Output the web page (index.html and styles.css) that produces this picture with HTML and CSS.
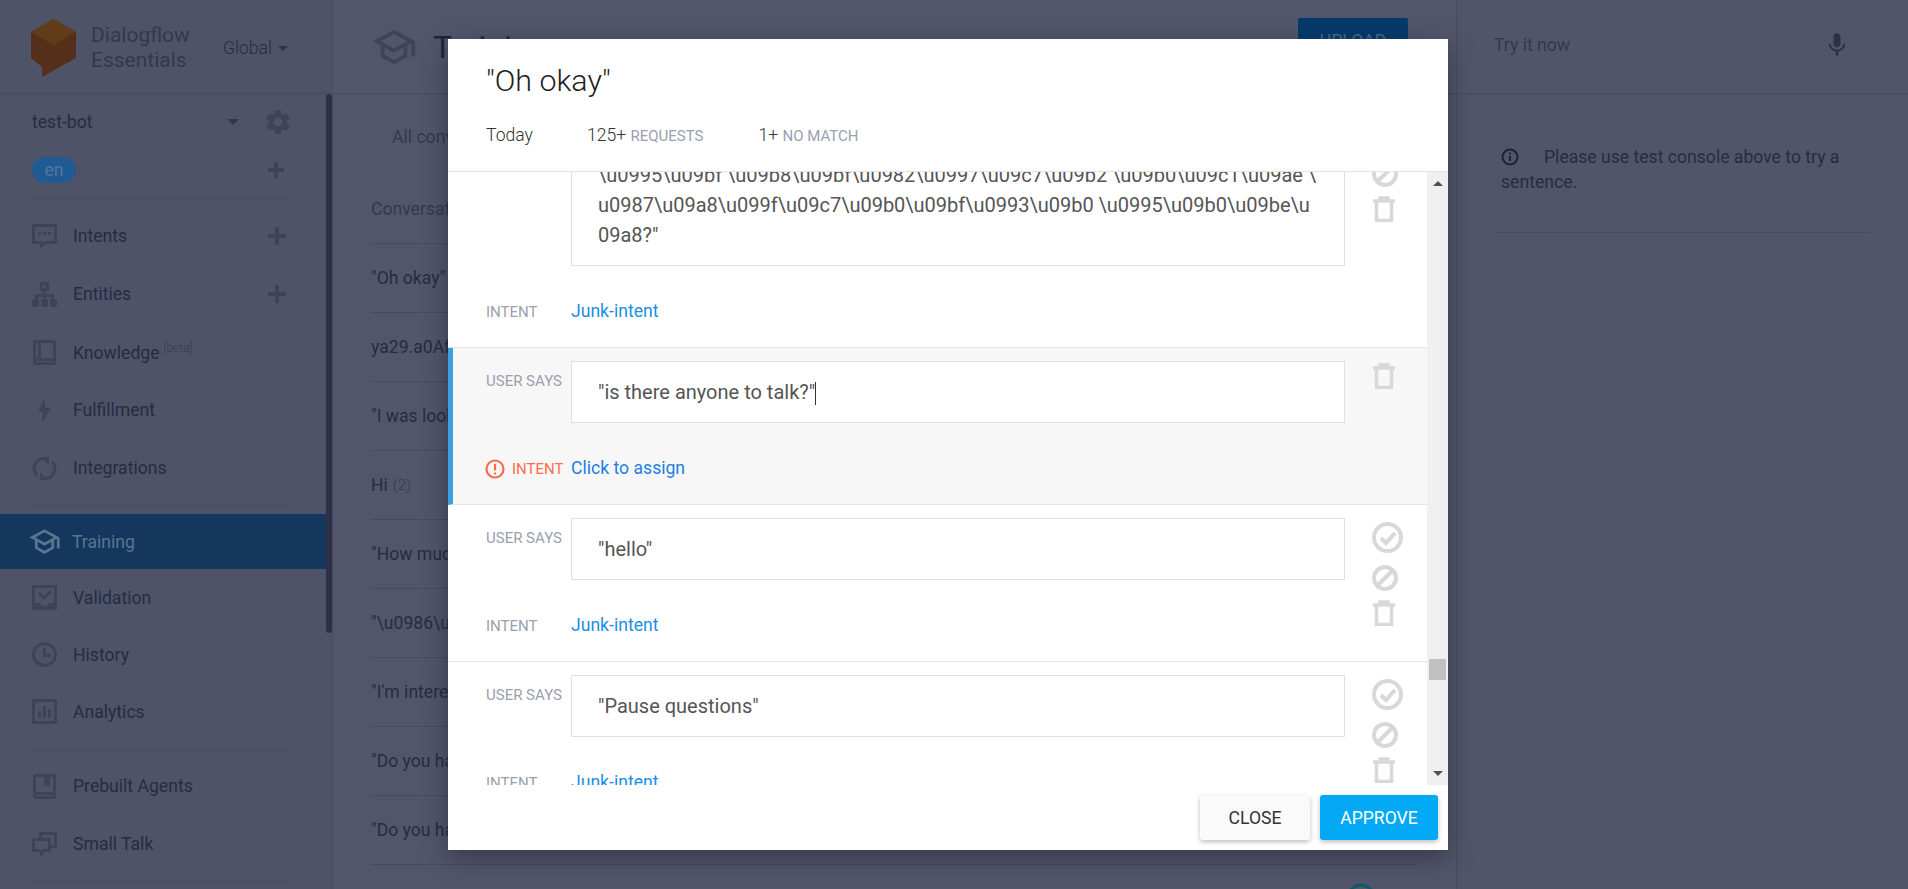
FILE: index.html
```html
<!DOCTYPE html>
<html lang="en">
<head>
    <meta charset="UTF-8">
    <title>Dialogflow Essentials - Training</title>
    <link rel="stylesheet" href="styles.css">
</head>
<body>
    <!-- Sidebar -->
    <aside class="sidebar">
        <div class="brand">
            <svg class="brand-logo" viewBox="0 0 45 58">
                <path fill="#562f1a" d="M0 13 22.500 0 45 13V39L11 58V48L0 39z"/>
                <path fill="#613c18" d="M0 13 22.500 0 45 13 22.500 26z"/>
            </svg>
            <div class="brand-name">Dialogflow<br>Essentials</div>
            <div class="region">Global <span class="caret-down"></span></div>
        </div>
        <div class="agent-row">
            <span class="agent-name">test-bot</span>
            <span class="caret-down agent-caret"></span>
            <svg class="nav-icon gear" viewBox="0 0 24 24"><path d="M19.140 12.940c.04-.3.06-.61.06-.94 0-.32-.02-.64-.07-.94l2.030-1.580c.18-.14.23-.41.12-.61l-1.920-3.320c-.12-.22-.37-.29-.59-.22l-2.390.96c-.5-.38-1.030-.7-1.620-.94l-.36-2.540c-.04-.24-.24-.41-.48-.41h-3.840c-.24 0-.43.17-.47.41l-.36 2.540c-.59.24-1.130.57-1.620.94l-2.390-.96c-.22-.08-.47 0-.59.22L2.740 8.870c-.12.21-.08.47.12.61l2.030 1.580c-.05.3-.09.63-.09.94s.02.64.07.94l-2.030 1.580c-.18.14-.23.41-.12.61l1.920 3.320c.12.22.37.29.59.22l2.390-.96c.5.38 1.030.7 1.620.94l.36 2.540c.05.24.24.41.48.41h3.840c.24 0 .44-.17.47-.41l.36-2.540c.59-.24 1.130-.56 1.620-.94l2.390.96c.22.08.47 0 .59-.22l1.920-3.320c.12-.22.07-.47-.12-.61l-2.010-1.580zM12 15.600c-1.980 0-3.600-1.620-3.600-3.600s1.620-3.600 3.600-3.600 3.600 1.620 3.600 3.600-1.620 3.600-3.600 3.600z"/></svg>
        </div>
        <div class="lang-row">
            <span class="lang-pill">en</span>
            <span class="plus plus-small"></span>
        </div>
        <div class="divider"></div>

        <a class="nav-item">
            <svg class="nav-icon" viewBox="0 0 25 25"><path fill-rule="evenodd" d="M1 0h23a1 1 0 0 1 1 1v18a1 1 0 0 1-1 1H14l-6 5v-5H1a1 1 0 0 1-1-1V1a1 1 0 0 1 1-1zm2 3v14h7v2.500l3-2.500h9V3z"/><rect x="6" y="8" width="3" height="3"/><rect x="11" y="8" width="3" height="3"/><rect x="16" y="8" width="3" height="3"/></svg>
            <span>Intents</span><span class="plus"></span>
        </a>
        <a class="nav-item">
            <svg class="nav-icon" viewBox="0 0 25 25"><path fill-rule="evenodd" d="M8 0h9v9H8zm3 3v3h3V3z"/><rect x="11" y="9" width="3" height="9"/><rect x="3" y="12" width="19" height="3"/><rect x="3" y="12" width="3" height="6"/><rect x="19" y="12" width="3" height="6"/><rect y="17" width="7" height="8" rx="2"/><rect x="9" y="17" width="7" height="8" rx="2"/><rect x="18" y="17" width="7" height="8" rx="2"/></svg>
            <span>Entities</span><span class="plus"></span>
        </a>
        <a class="nav-item">
            <svg class="nav-icon" viewBox="0 0 25 25"><path fill-rule="evenodd" d="M3 0h19a2 2 0 0 1 2 2v21a2 2 0 0 1-2 2H3a2 2 0 0 1-2-2V2a2 2 0 0 1 2-2zm1 3v15h2V3zm5 0v15h12V3zM4 21v1h17v-1z"/></svg>
            <span>Knowledge<sup class="beta">[beta]</sup></span>
        </a>
        <a class="nav-item">
            <svg class="nav-icon" viewBox="0 0 25 25"><path d="M13 0 6 14h5l-1 11 9-15h-6z"/></svg>
            <span>Fulfillment</span>
        </a>
        <a class="nav-item">
            <svg class="nav-icon" viewBox="0 0 25 25"><path class="sync-arc" d="M5 19.500A10 10 0 0 1 12 2.500M20 5.500A10 10 0 0 1 13 22.500"/><path d="M9 1h8v8zM16 24H8v-8z"/></svg>
            <span>Integrations</span>
        </a>
        <div class="divider"></div>

        <a class="nav-item active">
            <svg class="nav-icon school" viewBox="0 0 24 24"><path d="M12 3 1 9l4 2.180v6L12 21l7-3.820v-6l2-1.090V17h2V9L12 3zm6.820 6L12 12.720 5.180 9 12 5.280 18.820 9zM17 15.990l-5 2.730-5-2.730v-3.720L12 15l5-2.730v3.720z"/></svg>
            <span>Training</span>
        </a>
        <a class="nav-item compact">
            <svg class="nav-icon" viewBox="0 0 25 25"><path fill-rule="evenodd" d="M1 0h23a1 1 0 0 1 1 1v23a1 1 0 0 1-1 1H1a1 1 0 0 1-1-1V1a1 1 0 0 1 1-1zm2 3v15h5l2 3h5l2-3h5V3z"/><path d="m6 9 2-2 4 4 6-6 2 2-8 8z"/></svg>
            <span>Validation</span>
        </a>
        <a class="nav-item compact">
            <svg class="nav-icon" viewBox="0 0 25 25"><path fill-rule="evenodd" d="M12.500 0a12.500 12.500 0 1 1 0 25 12.500 12.500 0 0 1 0-25zm0 3a9.500 9.500 0 1 0 0 19 9.500 9.500 0 0 0 0-19z"/><path d="M11 6h3v6h5v3h-8z"/></svg>
            <span>History</span>
        </a>
        <a class="nav-item compact">
            <svg class="nav-icon" viewBox="0 0 25 25"><path fill-rule="evenodd" d="M1 0h23a1 1 0 0 1 1 1v23a1 1 0 0 1-1 1H1a1 1 0 0 1-1-1V1a1 1 0 0 1 1-1zm2 3v19h19V3z"/><rect x="6" y="12" width="3" height="7"/><rect x="11" y="7" width="3" height="12"/><rect x="16" y="10" width="3" height="9"/></svg>
            <span>Analytics</span>
        </a>
        <div class="divider divider-low"></div>

        <a class="nav-item">
            <svg class="nav-icon" viewBox="0 0 25 25"><path fill-rule="evenodd" d="M3 0h19a2 2 0 0 1 2 2v21a2 2 0 0 1-2 2H3a2 2 0 0 1-2-2V2a2 2 0 0 1 2-2zm1 3v15h17V3zm0 18v1h17v-1z"/><path d="M12 3h6v10l-3-2-3 2z"/></svg>
            <span>Prebuilt Agents</span>
        </a>
        <a class="nav-item">
            <svg class="nav-icon" viewBox="0 0 25 25"><path fill-rule="evenodd" d="M8 0h16a1 1 0 0 1 1 1v14a1 1 0 0 1-1 1h-5v3a1 1 0 0 1-1 1h-5l-5 5v-5H1a1 1 0 0 1-1-1V7a1 1 0 0 1 1-1h6V1a1 1 0 0 1 1-1zm2 3v3h8a1 1 0 0 1 1 1v6h3V3zM3 9v8h6v2.500l2.500-2.500H16V9z"/></svg>
            <span>Small Talk</span>
        </a>
        <div class="divider"></div>
        <div class="sidebar-scroll"></div>
    </aside>

    <!-- Training list behind the dialog -->
    <main class="main">
        <header class="main-header">
            <svg class="main-icon" viewBox="0 0 24 24"><path d="M12 3 1 9l4 2.180v6L12 21l7-3.820v-6l2-1.090V17h2V9L12 3zm6.820 6L12 12.720 5.180 9 12 5.280 18.820 9zM17 15.990l-5 2.730-5-2.730v-3.720L12 15l5-2.730v3.720z"/></svg>
            <h1>Training</h1>
            <button class="upload">UPLOAD</button>
        </header>
        <div class="tab-line">All conversations</div>
        <div class="conv-list">
            <div class="conv-row conv-head">Conversation</div>
            <div class="conv-row">"Oh okay"</div>
            <div class="conv-row">ya29.a0AfH6SM</div>
            <div class="conv-row">"I was looking for</div>
            <div class="conv-row">Hi <sup class="count">(2)</sup></div>
            <div class="conv-row">"How much is it</div>
            <div class="conv-row">"\u0986\u09aa\u09a8\u09be</div>
            <div class="conv-row">"I'm interested in</div>
            <div class="conv-row">"Do you have any</div>
            <div class="conv-row">"Do you have a</div>
        </div>
        <svg class="status-ring" viewBox="0 0 30 30"><circle cx="15" cy="15" r="13"/></svg>
    </main>

    <!-- Test console -->
    <aside class="console">
        <div class="console-head">
            <span>Try it now</span>
            <svg class="mic" viewBox="0 0 24 24"><path d="M12 14c1.660 0 3-1.340 3-3V5c0-1.660-1.340-3-3-3S9 3.340 9 5v6c0 1.660 1.340 3 3 3zm5.300-3c0 3-2.540 5.100-5.300 5.100S6.700 14 6.700 11H5c0 3.410 2.720 6.230 6 6.720V21h2v-3.280c3.280-.48 6-3.300 6-6.720h-1.700z"/></svg>
        </div>
        <div class="console-note">
            <svg class="info" viewBox="0 0 18 18"><circle cx="9" cy="9" r="7.500"/><rect x="8" y="8" width="2" height="5"/><rect x="8" y="4.500" width="2" height="2"/></svg>Please use test console above to try a sentence.
        </div>
    </aside>

    <!-- Conversation dialog -->
    <div class="backdrop">
        <section class="modal">
            <header class="modal-header">
                <h2>"Oh okay"</h2>
                <div class="modal-meta">
                    <span class="meta-date">Today</span>
                    <span class="meta-item">125+ <small>REQUESTS</small></span>
                    <span class="meta-item">1+ <small>NO MATCH</small></span>
                </div>
            </header>

            <div class="modal-body">
                <div class="log-list">
                    <div class="log-row first">
                        <div class="log-label">USER SAYS</div>
                        <div class="log-text">"\u0986\u09aa\u09a8\u09be\u09a6\u09c7\u09b0 \u098f\u0996\u09be\u09a8\u09c7<br>\u0995\u09bf \u09b8\u09bf\u0982\u0997\u09c7\u09b2 \u09b0\u09c1\u09ae \<br>u0987\u09a8\u099f\u09c7\u09b0\u09bf\u0993\u09b0 \u0995\u09b0\u09be\u<br>09a8?"</div>
                        <div class="log-actions">
                            <svg class="act-check" viewBox="0 0 31 31"><circle cx="15.500" cy="15.500" r="13.500"/><path d="m9 16 5 5 9-10"/></svg>
                            <svg class="act-ban" viewBox="0 0 26 26"><circle cx="13" cy="13" r="11"/><path d="M20.500 5.500l-15 15"/></svg>
                            <svg class="act-trash" viewBox="0 0 24 26"><path d="M1 5h22M8 5V2h8v3M4.500 5v19.500h15V5"/></svg>
                        </div>
                        <div class="log-label intent-label">INTENT</div>
                        <a class="log-link">Junk-intent</a>
                    </div>

                    <div class="log-row selected">
                        <div class="log-label">USER SAYS</div>
                        <div class="log-text">"is there anyone to talk?"<span class="text-caret"></span></div>
                        <div class="log-actions single">
                            <svg class="act-trash" viewBox="0 0 24 26"><path d="M1 5h22M8 5V2h8v3M4.500 5v19.500h15V5"/></svg>
                        </div>
                        <div class="log-label intent-label no-intent">
                            <svg class="warn" viewBox="0 0 20 20"><circle cx="10" cy="10" r="8.500"/><path d="M10 5v6.500M10 13.500v2"/></svg>
                            INTENT
                        </div>
                        <a class="log-link assign">Click to assign</a>
                    </div>

                    <div class="log-row">
                        <div class="log-label">USER SAYS</div>
                        <div class="log-text">"hello"</div>
                        <div class="log-actions">
                            <svg class="act-check" viewBox="0 0 31 31"><circle cx="15.500" cy="15.500" r="13.500"/><path d="m9 16 5 5 9-10"/></svg>
                            <svg class="act-ban" viewBox="0 0 26 26"><circle cx="13" cy="13" r="11"/><path d="M20.500 5.500l-15 15"/></svg>
                            <svg class="act-trash" viewBox="0 0 24 26"><path d="M1 5h22M8 5V2h8v3M4.500 5v19.500h15V5"/></svg>
                        </div>
                        <div class="log-label intent-label">INTENT</div>
                        <a class="log-link">Junk-intent</a>
                    </div>

                    <div class="log-row">
                        <div class="log-label">USER SAYS</div>
                        <div class="log-text">"Pause questions"</div>
                        <div class="log-actions">
                            <svg class="act-check" viewBox="0 0 31 31"><circle cx="15.500" cy="15.500" r="13.500"/><path d="m9 16 5 5 9-10"/></svg>
                            <svg class="act-ban" viewBox="0 0 26 26"><circle cx="13" cy="13" r="11"/><path d="M20.500 5.500l-15 15"/></svg>
                            <svg class="act-trash" viewBox="0 0 24 26"><path d="M1 5h22M8 5V2h8v3M4.500 5v19.500h15V5"/></svg>
                        </div>
                        <div class="log-label intent-label">INTENT</div>
                        <a class="log-link">Junk-intent</a>
                    </div>
                </div>
                <div class="scrollbar">
                    <span class="arrow-up"></span>
                    <span class="scroll-thumb"></span>
                    <span class="arrow-down"></span>
                </div>
            </div>

            <footer class="modal-footer">
                <button class="btn btn-close">CLOSE</button>
                <button class="btn btn-approve">APPROVE</button>
            </footer>
        </section>
    </div>
</body>
</html>
```

FILE: styles.css
```css
html, body {
    height: 100%;
}
body {
    margin: 0;
    display: flex;
    height: 889px;
    overflow: hidden;
    font-family: Roboto, Arial, sans-serif;
    font-size: 17.6px;
    color: #262b45;
    background-color: #51556a;
}

/* Sidebar */
.sidebar {
    position: relative;
    width: 333px;
    flex-shrink: 0;
    padding-right: 6px;
    box-sizing: border-box;
    border-right: 1px solid #474b61;
    background-color: #4f5368;
}
.brand {
    display: flex;
    align-items: center;
    height: 91px;
    margin-right: -6px;
    padding: 2px 0 0 31px;
    border-bottom: 1px solid #474b61;
}
.brand-logo {
    width: 45px;
    height: 58px;
    flex-shrink: 0;
}
.brand-name {
    margin-left: 15px;
    font-size: 21px;
    line-height: 25px;
    color: #33384f;
}
.region {
    margin-left: 33px;
    font-weight: 300;
    font-size: 17.6px;
    white-space: nowrap;
    color: #262b45;
}
.caret-down {
    display: inline-block;
    width: 0;
    height: 0;
    margin-left: 2px;
    vertical-align: middle;
    border-top: 5px solid #2f334a;
    border-left: 5px solid transparent;
    border-right: 5px solid transparent;
}
.agent-row {
    display: flex;
    align-items: center;
    height: 56px;
    padding: 0 38px 0 32px;
}
.agent-name {
    flex: 1;
}
.agent-caret {
    margin-right: 24px;
    border-top-color: #33374d;
    border-top-width: 6px;
    border-left-width: 6px;
    border-right-width: 6px;
}
.nav-icon {
    width: 25px;
    height: 25px;
    flex-shrink: 0;
    fill: #3f4359;
}
.gear {
    width: 30px;
    height: 30px;
    margin-right: -5px;
}
.sync-arc {
    fill: none;
    stroke: #3f4359;
    stroke-width: 3;
}
.lang-row {
    display: flex;
    align-items: center;
    justify-content: space-between;
    height: 40px;
    padding: 0 38px 0 32px;
}
.lang-pill {
    width: 44px;
    height: 26px;
    border-radius: 13px;
    line-height: 26px;
    text-align: center;
    font-size: 17.6px;
    color: #54779f;
    background-color: #1f5a93;
}
.divider {
    height: 1px;
    margin: 8px 38px 8px 32px;
    background-color: #474b61;
}
.divider-low {
    margin-top: 10px;
    margin-bottom: 6px;
}
.nav-item {
    display: flex;
    align-items: center;
    height: 58px;
    padding: 0 38px 0 32px;
    color: #262b45;
}
.nav-item.compact {
    height: 57px;
}
.nav-item > span:first-of-type {
    flex: 1;
    margin-left: 16px;
}
.nav-item.active {
    height: 55px;
    padding-left: 28px;
    color: #5a7590;
    background-color: #15375e;
}
.nav-item.active .nav-icon {
    width: 33px;
    height: 33px;
    fill: #5a7590;
}
.nav-item.active > span:first-of-type {
    margin-left: 11px;
}
.plus {
    position: relative;
    width: 18px;
    height: 18px;
    margin-right: 2px;
    flex: none !important;
}
.plus::before,
.plus::after {
    content: "";
    position: absolute;
    background-color: #3f4359;
}
.plus::before {
    left: 0;
    right: 0;
    top: 7px;
    height: 4px;
}
.plus::after {
    top: 0;
    bottom: 0;
    left: 7px;
    width: 4px;
}
.plus-small {
    width: 16px;
    height: 16px;
    margin-right: 4px;
}
.plus-small::before {
    top: 6px;
}
.plus-small::after {
    left: 6px;
}
.beta {
    margin-left: 4px;
    font-size: 12px;
    font-weight: 300;
    color: #363b55;
}
.sidebar-scroll {
    position: absolute;
    top: 94px;
    right: 0;
    width: 6px;
    height: 539px;
    border-radius: 3px;
    background-color: #2d3047;
}

/* Training list */
.main {
    position: relative;
    flex: 1;
    border-right: 1px solid #474b61;
    background-color: #53566b;
}
.main-header {
    display: flex;
    align-items: center;
    height: 93px;
    padding: 0 48px 0 38px;
    border-bottom: 1px solid #474b61;
}
.main-icon {
    width: 46px;
    height: 46px;
    fill: #3f4359;
}
.main-header h1 {
    flex: 1;
    margin: 0 0 0 16px;
    font-size: 32px;
    font-weight: 400;
    color: #20253f;
}
.upload {
    align-self: flex-start;
    width: 110px;
    height: 46px;
    margin-top: 18px;
    border: 0;
    border-radius: 2px;
    font: 400 17.6px Roboto, sans-serif;
    color: #4a6a8a;
    background-color: #053b6b;
}
.tab-line {
    height: 87px;
    padding-left: 59px;
    line-height: 86px;
    color: #33384f;
}
.conv-list {
    margin: -6px 38px 0;
}
.conv-row {
    display: flex;
    align-items: center;
    gap: 5px;
    height: 68px;
    border-bottom: 1px solid #474b61;
    white-space: nowrap;
}
.conv-head {
    color: #33384f;
}
.count {
    font-size: 15px;
    font-weight: 300;
    color: #33384f;
}
.status-ring {
    position: absolute;
    left: 1013px;
    top: 883px;
    width: 30px;
    height: 30px;
    fill: none;
    stroke: #0f5a66;
    stroke-width: 3;
}

/* Test console */
.console {
    width: 451px;
    flex-shrink: 0;
    background-color: #51556a;
}
.console-head {
    display: flex;
    align-items: center;
    justify-content: space-between;
    height: 94px;
    padding: 0 57px 4px 37px;
    box-sizing: border-box;
    border-bottom: 1px solid #474b61;
    color: #33384f;
}
.mic {
    width: 28px;
    height: 28px;
    fill: #2d3047;
}
.console-note {
    margin: 51px 38px 0;
    padding: 0 6px 37px;
    line-height: 25px;
    border-bottom: 1px solid #474b61;
    color: #262b45;
}
.info {
    width: 18px;
    height: 18px;
    margin-right: 25px;
    vertical-align: -3px;
    fill: #1e2236;
}
.info circle {
    fill: none;
    stroke: #1e2236;
    stroke-width: 2;
}

/* Dialog */
.backdrop {
    position: absolute;
    inset: 0;
}
.modal {
    position: absolute;
    top: 39px;
    left: 448px;
    width: 1000px;
    height: 811px;
    display: flex;
    flex-direction: column;
    background-color: #fff;
    box-shadow: 0 8px 24px rgba(20, 22, 40, 0.45);
}
.modal-header {
    height: 133px;
    flex-shrink: 0;
    padding-left: 38px;
    box-sizing: border-box;
    border-bottom: 1px solid #e4e4e4;
}
.modal-header h2 {
    margin: 0;
    padding-top: 20px;
    font-size: 30.400px;
    line-height: 44px;
    font-weight: 300;
    color: #212121;
}
.modal-meta {
    display: flex;
    align-items: baseline;
    margin-top: 20px;
    line-height: 24px;
    font-weight: 300;
    color: #333;
}
.meta-date {
    width: 101px;
}
.meta-item {
    margin-right: 55px;
}
.meta-item small {
    font-size: 15px;
    font-weight: 400;
    color: #9aa0ae;
}
.modal-body {
    display: flex;
    height: 613px;
    flex-shrink: 0;
}
.log-list {
    flex: 1;
    overflow: hidden;
}
.log-row {
    display: grid;
    grid-template-columns: 85px 774px auto;
    grid-template-rows: auto auto;
    align-content: start;
    height: 157px;
    padding: 13px 0 0 38px;
    box-sizing: border-box;
    border-bottom: 1px solid #e4e4e4;
}
.log-row.first {
    height: 247px;
    margin-top: -71px;
}
.log-row.selected {
    padding-left: 33px;
    border-left: 5px solid #3aa0e0;
    background-color: #f7f7f7;
}
.log-label {
    padding-top: 10px;
    font-size: 15px;
    line-height: 20px;
    white-space: nowrap;
    color: #9aa0ae;
}
.log-text {
    padding: 15px 26px;
    box-sizing: border-box;
    border: 1px solid #e0e0e0;
    font-size: 20px;
    line-height: 30px;
    white-space: nowrap;
    color: #555;
    background-color: #fff;
}
.text-caret {
    display: inline-block;
    width: 1px;
    height: 23px;
    vertical-align: middle;
    background-color: #333;
}
.log-actions {
    grid-row: 1 / span 2;
    grid-column: 3;
    display: flex;
    flex-direction: column;
    align-items: flex-start;
    gap: 9px;
    margin-left: 27px;
    padding-top: 4px;
}
.log-actions.single {
    padding-top: 2px;
}
.log-actions svg {
    display: block;
    fill: none;
    stroke: #d8d8d8;
}
.act-check {
    width: 31px;
    height: 31px;
    margin-bottom: 3px;
    stroke-width: 4;
}
.act-ban {
    width: 26px;
    height: 26px;
    stroke-width: 4;
}
.act-trash {
    width: 24px;
    height: 26px;
    stroke-width: 3.500;
}
.intent-label {
    margin-top: 34px;
    padding-top: 2px;
    height: 22px;
    box-sizing: border-box;
}
.no-intent {
    display: flex;
    align-items: center;
    gap: 7px;
    margin-left: -1px;
    color: #ff6b4f;
}
.warn {
    width: 20px;
    height: 20px;
    flex-shrink: 0;
    fill: none;
    stroke: #ff6b4f;
    stroke-width: 2.200;
}
.log-link {
    grid-column: 2;
    margin-top: 33px;
    font-size: 17.6px;
    line-height: 24px;
    color: #1a8fe3;
}
.log-link.assign {
    color: #1e7fe0;
}
.scrollbar {
    position: relative;
    width: 21px;
    background-color: #f0f0f0;
}
.arrow-up,
.arrow-down {
    position: absolute;
    left: 6px;
    width: 0;
    height: 0;
    border-left: 5px solid transparent;
    border-right: 5px solid transparent;
}
.arrow-up {
    top: 9px;
    border-bottom: 5px solid #505050;
}
.arrow-down {
    bottom: 9px;
    border-top: 5px solid #505050;
}
.scroll-thumb {
    position: absolute;
    top: 487px;
    left: 2px;
    width: 17px;
    height: 21px;
    background-color: #c1c1c1;
}
.modal-footer {
    display: flex;
    justify-content: flex-end;
    gap: 10px;
    padding: 10px 10px 0 0;
}
.btn {
    height: 45px;
    border: 0;
    border-radius: 3px;
    font: 400 17.6px Roboto, sans-serif;
    box-shadow: 0 2px 5px rgba(0, 0, 0, 0.26);
}
.btn-close {
    width: 110px;
    color: #333;
    background-color: #fafafa;
}
.btn-approve {
    width: 118px;
    color: #fff;
    background-color: #03a9f4;
}
```
